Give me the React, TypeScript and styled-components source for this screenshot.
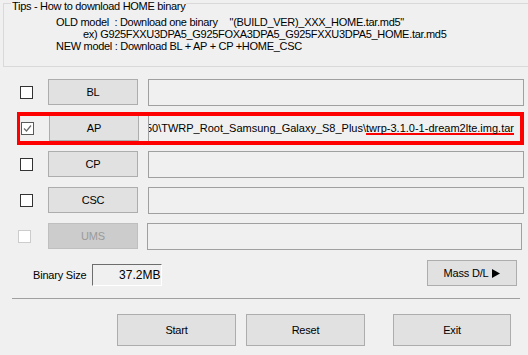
import React from 'react';
import styled, { createGlobalStyle } from 'styled-components';

const GlobalStyle = createGlobalStyle`
  html, body {
    margin: 0;
    padding: 0;
    background: #f0f0f0;
  }
  body {
    font-family: "Liberation Sans", Arial, sans-serif;
    font-size: 11px;
    color: #000;
  }
`;

const Window = styled.div`
  width: 528px;
  height: 355px;
  overflow: hidden;
  background: #f0f0f0;
  display: flex;
  flex-direction: column;
`;

const TipsBox = styled.div`
  position: relative;
  margin: 3px 0 0 3px;
  width: 560px;
  flex-shrink: 0;
  box-sizing: border-box;
  border: 1px solid #d9d9d9;
  padding: 12px 0 14px 52px;
`;

const TipsTitle = styled.span`
  position: absolute;
  top: -4px;
  left: 7px;
  padding: 0 1px;
  line-height: 12px;
  letter-spacing: -0.3px;
  background: #f0f0f0;
`;

const TipLine = styled.div<{ indent?: number }>`
  line-height: 12px;
  white-space: pre;
  letter-spacing: -0.3px;
  padding-left: ${p => p.indent || 0}px;
`;

const Quoted = styled.span`
  margin-left: 12px;
`;

const Rows = styled.div`
  margin-top: 12px;
  padding: 0 4px 0 20px;
  display: flex;
  flex-direction: column;
  gap: 9px;
`;

const Row = styled.div`
  position: relative;
  display: flex;
  align-items: flex-start;
  height: 27px;
`;

const Check = styled.span<{ checked?: boolean; disabled?: boolean }>`
  box-sizing: border-box;
  width: 13px;
  height: 13px;
  margin-top: 7px;
  margin-left: ${p => (p.disabled ? -2 : p.checked ? 1 : 0)}px;
  border: 1px solid ${p => (p.disabled ? '#cccccc' : p.checked ? '#5a5a5a' : '#333333')};
  background: #fff;
  display: flex;
  align-items: center;
  justify-content: center;
  flex-shrink: 0;
`;

const FileButton = styled.button<{ disabled?: boolean }>`
  box-sizing: border-box;
  width: 90px;
  height: 26px;
  margin-left: ${p => (p.disabled ? 17 : 15)}px;
  padding: 0;
  font: inherit;
  letter-spacing: -0.2px;
  color: ${p => (p.disabled ? '#9a9a9a' : '#000')};
  background: ${p => (p.disabled ? '#cccccc' : '#e1e1e1')};
  border: 1px solid ${p => (p.disabled ? '#bfbfbf' : '#adadad')};
  flex-shrink: 0;
`;

const PathField = styled.div<{ wide?: boolean }>`
  box-sizing: border-box;
  height: 27px;
  flex: 1;
  margin-left: ${p => (p.wide ? 9 : 10)}px;
  margin-right: ${p => (p.wide ? 2 : 0)}px;
  border: 1px solid #a0a0a0;
  background: #f0f0f0;
  display: flex;
  justify-content: flex-end;
  align-items: center;
  padding: 0 7px 1px 2px;
  overflow: hidden;
  white-space: nowrap;
  min-width: 0;
`;

const Marked = styled.span`
  text-decoration: underline;
  text-decoration-color: #ff0000;
  text-decoration-thickness: 2px;
  text-underline-offset: 1px;
  text-decoration-skip-ink: none;
`;

const Highlight = styled.div`
  position: absolute;
  top: -3px;
  bottom: -3px;
  left: -3px;
  right: 0;
  border: 4px solid #ff0000;
  border-left-width: 3px;
  pointer-events: none;
`;

const InfoRow = styled.div`
  margin-top: 10px;
  display: flex;
  align-items: flex-end;
  justify-content: space-between;
  padding: 0 11px 0 33px;
`;

const SizeGroup = styled.div`
  display: flex;
  align-items: center;
  gap: 6px;
`;

const SizeLabel = styled.span`
  letter-spacing: -0.2px;
`;

const SizeBox = styled.div`
  box-sizing: border-box;
  width: 70px;
  height: 22px;
  border-top: 1px solid #6d6d6d;
  border-left: 1px solid #6d6d6d;
  border-right: 1px solid #ffffff;
  border-bottom: 1px solid #ffffff;
  background: #f0f0f0;
  text-align: right;
  padding: 3px 1px 0 0;
  font-size: 12px;
`;

const PushButton = styled.button<{ w: number; h: number }>`
  box-sizing: border-box;
  width: ${p => p.w}px;
  height: ${p => p.h}px;
  padding: 0;
  font: inherit;
  letter-spacing: -0.2px;
  color: #000;
  background: #e1e1e1;
  border: 1px solid #adadad;
  display: flex;
  align-items: center;
  justify-content: center;
  gap: 4px;
`;

const Separator = styled.div`
  margin: 12px 8px 0 12px;
  border-top: 1px solid #a0a0a0;
`;

const Footer = styled.div`
  margin-top: 15px;
  display: flex;
  padding-left: 117px;
`;

const FooterSlot = styled.div<{ gap: number }>`
  margin-left: ${p => p.gap}px;
`;

const CheckMark = () => (
  <svg width="9" height="9" viewBox="0 0 9 9">
    <polyline points="1,4.5 3.5,7 8,1.5" fill="none" stroke="#6a6a6a" strokeWidth="1.2" />
  </svg>
);

const PlayArrow = () => (
  <svg width="8" height="9" viewBox="0 0 8 9">
    <polygon points="0,0 8,4.5 0,9" fill="#000" />
  </svg>
);

const rows = [
  { name: 'BL' },
  { name: 'AP', checked: true },
  { name: 'CP' },
  { name: 'CSC' },
  { name: 'UMS', disabled: true },
];

const App: React.FC = () => {
  return (
    <Window>
      <GlobalStyle />
      <TipsBox>
        <TipsTitle>Tips - How to download HOME binary</TipsTitle>
        <TipLine>
          OLD model  : Download one binary<Quoted>"(BUILD_VER)_XXX_HOME.tar.md5"</Quoted>
        </TipLine>
        <TipLine indent={27}>ex) G925FXXU3DPA5_G925FOXA3DPA5_G925FXXU3DPA5_HOME.tar.md5</TipLine>
        <TipLine>NEW model : Download BL + AP + CP +HOME_CSC</TipLine>
      </TipsBox>

      <Rows>
        {rows.map(row => (
          <Row key={row.name}>
            <Check checked={row.checked} disabled={row.disabled}>
              {row.checked && <CheckMark />}
            </Check>
            <FileButton disabled={row.disabled}>{row.name}</FileButton>
            <PathField wide={row.disabled || row.checked}>
              {row.checked && (
                <span>
                  D:\Firmware\SM-G950\TWRP_Root_Samsung_Galaxy_S8_Plus\
                  <Marked>twrp-3.1.0-1-dream2lte.img.tar</Marked>
                </span>
              )}
            </PathField>
            {row.checked && <Highlight />}
          </Row>
        ))}
      </Rows>

      <InfoRow>
        <SizeGroup>
          <SizeLabel>Binary Size</SizeLabel>
          <SizeBox>37.2MB</SizeBox>
        </SizeGroup>
        <PushButton w={90} h={26}>
          Mass D/L <PlayArrow />
        </PushButton>
      </InfoRow>

      <Separator />

      <Footer>
        <PushButton w={119} h={32}>Start</PushButton>
        <FooterSlot gap={10}>
          <PushButton w={119} h={32}>Reset</PushButton>
        </FooterSlot>
        <FooterSlot gap={28}>
          <PushButton w={118} h={32}>Exit</PushButton>
        </FooterSlot>
      </Footer>
    </Window>
  );
};

export default App;
